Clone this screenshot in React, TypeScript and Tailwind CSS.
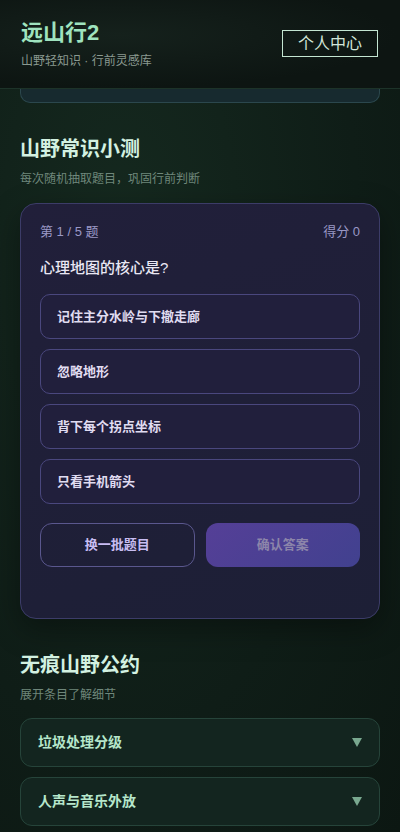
import React from 'react';

const font = { fontFamily: '"Liberation Sans", "Noto Sans CJK SC", sans-serif' };

const options = ['记住主分水岭与下撤走廊', '忽略地形', '背下每个拐点坐标', '只看手机箭头'];
const pledges = ['垃圾处理分级', '人声与音乐外放'];

export default function App() {
  return (
    <div
      style={font}
      className="w-[400px] h-[832px] overflow-hidden bg-[radial-gradient(ellipse_at_30%_30%,#15291f_0%,#0f1d17_60%,#0c1712_100%)]"
    >
      {/* Header */}
      <header className="h-[89px] border-b border-[#1d3329] bg-[radial-gradient(ellipse_at_30%_40%,#15211c_0%,#0d1512_70%)] pl-[21px] pr-5 flex items-center justify-between">
        <div className="flex flex-col">
          <h1 className="text-[22px] leading-[28px] font-bold text-[#9fe3bf]">远山行2</h1>
          <p className="mt-[6px] text-[12px] leading-[16px] text-[#8a9990]">山野轻知识 · 行前灵感库</p>
        </div>
        <button className="h-[27px] px-[15px] border border-[#c4e6d2] text-[16px] leading-[20px] text-[#d2e6d9] mr-[2px] mb-[1px]">
          个人中心
        </button>
      </header>

      {/* Scrolled card bottom */}
      <div className="mx-5 h-[14px] rounded-b-[10px] border border-t-0 border-[#2b474d] bg-[#172a2f]" />

      {/* Quiz section */}
      <section className="px-5 pt-[33px]">
        <h2 className="text-[20px] leading-[26px] font-bold text-[#d3f1e1]">山野常识小测</h2>
        <p className="mt-[9px] text-[12px] leading-[16px] text-[#6f877b]">每次随机抽取题目，巩固行前判断</p>

        <div className="mt-[16px] rounded-[16px] border border-[#3c3c68] bg-[linear-gradient(160deg,#211f3a_0%,#1d1f36_100%)] px-[19px] pt-[19px] pb-[51px] shadow-[0_10px_30px_rgba(0,0,0,0.35)]">
          <div className="flex justify-between text-[13px] leading-[18px] text-[#9a98c6]">
            <span>第 1 / 5 题</span>
            <span>得分 0</span>
          </div>
          <p className="mt-[17px] text-[15px] leading-[20px] font-medium text-[#e9e7f3]">心理地图的核心是?</p>

          <div className="mt-[16px] flex flex-col gap-[10px]">
            {options.map((o) => (
              <button
                key={o}
                className="h-[45px] rounded-[10px] border border-[#4a477e] bg-[#211f3c] px-4 text-left text-[13px] font-bold text-[#e0dcf1]"
              >
                {o}
              </button>
            ))}
          </div>

          <div className="mt-[19px] grid grid-cols-2 gap-[11px]">
            <button className="h-[44px] rounded-[12px] border border-[#5a578e] text-[13px] font-bold text-[#c8bdf2]">
              换一批题目
            </button>
            <button className="h-[44px] rounded-[12px] bg-[linear-gradient(135deg,#553f97_0%,#41418f_100%)] text-[13px] font-bold text-[#8c85aa]">
              确认答案
            </button>
          </div>
        </div>
      </section>

      {/* Leave no trace */}
      <section className="px-5 pt-[33px]">
        <h2 className="text-[20px] leading-[26px] font-bold text-[#d3f1e1]">无痕山野公约</h2>
        <p className="mt-[9px] text-[12px] leading-[16px] text-[#6f877b]">展开条目了解细节</p>

        <div className="mt-[15px] flex flex-col gap-[10px]">
          {pledges.map((p) => (
            <div
              key={p}
              className="h-[49px] rounded-[12px] border border-[#26443a] bg-[#13251f] pl-[17px] pr-[16px] flex items-center justify-between"
            >
              <span className="text-[14px] font-bold text-[#b6e7cb]">{p}</span>
              <svg width="10" height="9" viewBox="0 0 10 9" className="mr-[1px]">
                <polygon points="0,0 10,0 5,9" fill="#79a88f" />
              </svg>
            </div>
          ))}
        </div>
      </section>
    </div>
  );
}
